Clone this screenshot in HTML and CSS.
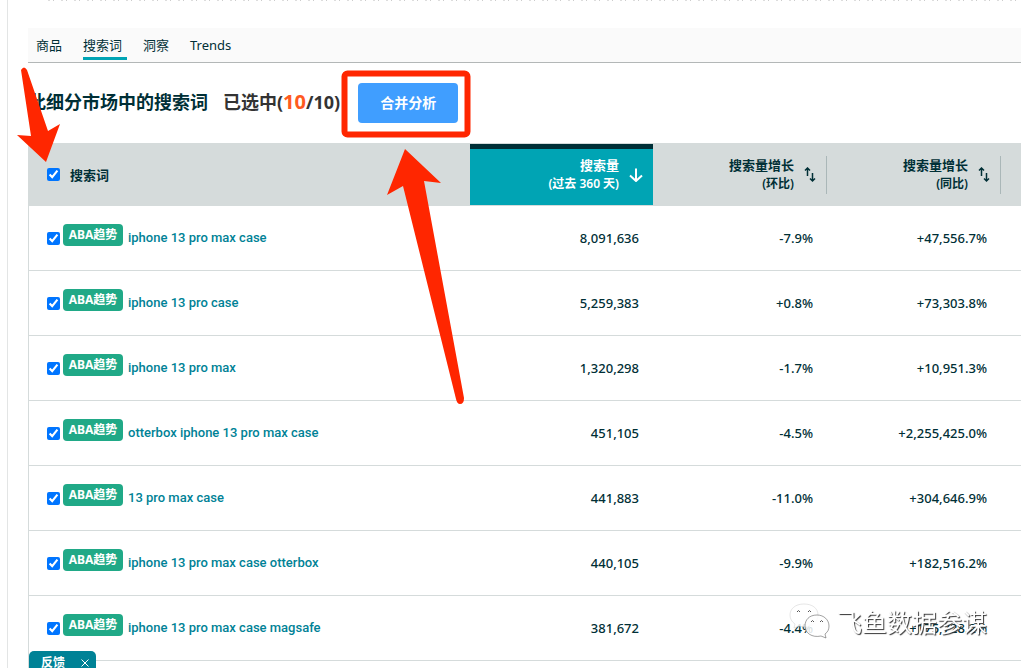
FILE: index.html
```
<!DOCTYPE html>
<html lang="zh-CN">
<head>
<meta charset="utf-8">
<title>搜索词</title>
<link rel="stylesheet" href="styles.css">
</head>
<body>
<main class="page">
  <div class="clipped-line"></div>
  <nav class="tabs">
    <a class="tab" href="#products">商品</a>
    <a class="tab tab-active" href="#terms">搜索词</a>
    <a class="tab" href="#insights">洞察</a>
    <a class="tab" href="#trends">Trends</a>
  </nav>
  <header class="toolbar">
    <h1 class="title">此细分市场中的搜索词</h1>
    <p class="selected">已选中(<span class="count">10</span>/10)</p>
    <button class="merge" type="button">合并分析</button>
  </header>
  <table class="terms">
    <colgroup><col><col class="col-volume"><col class="col-growth"><col class="col-growth"><col class="col-rest"></colgroup>
    <thead>
      <tr>
        <th scope="col"><label class="term"><input type="checkbox" checked><span class="all">搜索词</span></label></th>
        <th scope="col" class="sorted"><div class="head"><span>搜索量<br><small>(过去 360 天)</small></span><svg class="sort-down" viewBox="0 0 14 14"><path d="M7 0.500V13M1 7.500L7 13L13 7.500"/></svg></div></th>
        <th scope="col"><div class="head ruled"><span>搜索量增长<br><small>(环比)</small></span><svg class="sort" viewBox="0 0 12 16"><path d="M3.500 9V1M1 3.500L3.500 1L6 3.500M8.500 6V14M6 11.500L8.500 14L11 11.500"/></svg></div></th>
        <th scope="col"><div class="head ruled"><span>搜索量增长<br><small>(同比)</small></span><svg class="sort" viewBox="0 0 12 16"><path d="M3.500 9V1M1 3.500L3.500 1L6 3.500M8.500 6V14M6 11.500L8.500 14L11 11.500"/></svg></div></th>
        <th></th>
      </tr>
    </thead>
    <tbody>
      <tr><td><div class="term"><input type="checkbox" checked aria-label="iphone 13 pro max case"><button class="aba" type="button">ABA趋势</button><a href="#t1">iphone 13 pro max case</a></div></td><td>8,091,636</td><td>-7.9%</td><td>+47,556.7%</td><td></td></tr>
      <tr><td><div class="term"><input type="checkbox" checked aria-label="iphone 13 pro case"><button class="aba" type="button">ABA趋势</button><a href="#t2">iphone 13 pro case</a></div></td><td>5,259,383</td><td>+0.8%</td><td>+73,303.8%</td><td></td></tr>
      <tr><td><div class="term"><input type="checkbox" checked aria-label="iphone 13 pro max"><button class="aba" type="button">ABA趋势</button><a href="#t3">iphone 13 pro max</a></div></td><td>1,320,298</td><td>-1.7%</td><td>+10,951.3%</td><td></td></tr>
      <tr><td><div class="term"><input type="checkbox" checked aria-label="otterbox iphone 13 pro max case"><button class="aba" type="button">ABA趋势</button><a href="#t4">otterbox iphone 13 pro max case</a></div></td><td>451,105</td><td>-4.5%</td><td>+2,255,425.0%</td><td></td></tr>
      <tr><td><div class="term"><input type="checkbox" checked aria-label="13 pro max case"><button class="aba" type="button">ABA趋势</button><a href="#t5">13 pro max case</a></div></td><td>441,883</td><td>-11.0%</td><td>+304,646.9%</td><td></td></tr>
      <tr><td><div class="term"><input type="checkbox" checked aria-label="iphone 13 pro max case otterbox"><button class="aba" type="button">ABA趋势</button><a href="#t6">iphone 13 pro max case otterbox</a></div></td><td>440,105</td><td>-9.9%</td><td>+182,516.2%</td><td></td></tr>
      <tr><td><div class="term"><input type="checkbox" checked aria-label="iphone 13 pro max case magsafe"><button class="aba" type="button">ABA趋势</button><a href="#t7">iphone 13 pro max case magsafe</a></div></td><td>381,672</td><td>-4.4%</td><td>+175,728.2%</td><td></td></tr>
      <tr class="next"><td></td><td></td><td></td><td></td><td></td></tr>
    </tbody>
  </table>
</main>
<button class="feedback" type="button"><span>反馈</span><svg viewBox="0 0 8 8"><path d="M0.500 0.500L7.500 7.500M7.500 0.500L0.500 7.500"/></svg></button>
<svg class="marks" viewBox="0 0 480 410" aria-hidden="true">
  <rect x="344.500" y="73.500" width="123" height="61" rx="3"/>
  <path d="M21 70Q24 65 27 70L48 131L60 124L46 162L17 135L31 136Z"/>
  <path d="M405 149L441 183L424 181L464 398Q464 404 460 404Q457 404 456 399L403 186L387 195Z"/>
</svg>
<div class="watermark">
  <svg viewBox="0 0 42 36"><path class="bubble" d="M15 1C6 1 1 6 1 12C1 16 3 19 6 21L5 25L10 23C21 26 29 20 29 12C29 5 23 1 15 1Z"/><path class="bubble edge" d="M28 12C20 12 16 17 16 23C16 30 23 35 32 33L37 35L36 31C39 29 40 26 40 23C40 17 35 12 28 12Z"/><path class="eyes" d="M8 9Q9.500 6 11 9M19 9Q20.500 6 22 9M22 19Q23.500 16 25 19M31 19Q32.500 16 34 19"/></svg>
  <span>飞鱼数据参谋</span>
</div>
</body>
</html>
```
FILE: styles.css
```
* { box-sizing: border-box; }
body {
  margin: 0;
  height: 100vh;
  overflow: hidden;
  background: #fff;
  color: #002f36;
  font: 13px/20px "Noto Sans", "Noto Sans CJK SC", sans-serif;
}
button { font: inherit; border: 0; padding: 0; color: #fff; }
a { text-decoration: none; color: inherit; }
.page {
  min-height: 100vh;
  margin-left: 7px;
  padding-left: 20px;
  border-left: 1px solid #e3e5e5;
}
.clipped-line {
  height: 1px;
  margin: 0 0 27px 20px;
  background: repeating-linear-gradient(90deg, #ddd 0 2px, #fff 2px 5px, #ccc 5px 6px, #fff 6px 13px);
}
.tabs {
  display: flex;
  gap: 16px;
  height: 35px;
  padding: 7px 8px 0;
  background: #fafafa;
  border-bottom: 1px solid #b3b7b7;
}
.tab { padding-right: 5px; height: 25px; }
.tab-active { border-bottom: 3px solid #00a4b4; }
.toolbar {
  display: flex;
  align-items: center;
  height: 80px;
}
.title, .selected { margin: 0; padding-bottom: 2px; font-size: 18px; line-height: 28px; font-weight: 600; }
.selected { margin: 0 18px 0 15px; color: #333; font-weight: 700; }
.count { color: #ff5a1f; font-size: 20px; }
.merge {
  width: 100px;
  height: 40px;
  border-radius: 4px;
  background: #409eff;
  font-size: 14px;
  font-weight: 600;
}
.terms { width: 100%; table-layout: fixed; border-collapse: separate; border-spacing: 0; border-left: 1px solid #d5dbdb; }
.col-volume { width: 183px; }
.col-growth { width: 174px; }
.col-rest { width: 20px; }
th { height: 63px; padding: 0; background: #d5dbdb; font-weight: 600; text-align: left; }
th.sorted { color: #fff; background: #00a4b4; border: solid #d5dbdb; border-width: 1px 0; box-shadow: inset 0 5px #002f36; }
th small { font-size: 12px; }
.head {
  display: flex;
  justify-content: flex-end;
  align-items: center;
  gap: 10px;
  height: 38px;
  padding-right: 10px;
  line-height: 18px;
  text-align: right;
}
.ruled { border-right: 1px solid #aab7b8; }
.head svg { fill: none; stroke: currentColor; stroke-width: 2; }
.sort-down { width: 14px; height: 14px; }
.sort { width: 12px; height: 16px; }
.head .sort { stroke-width: 1.5; }
td { height: 65px; padding: 0 14px 0 0; border-bottom: 1px solid #d5dbdb; text-align: right; font-weight: 500; }
.next td { height: 8px; border: 0; }
.term { display: flex; align-items: center; padding-left: 18px; }
.term input { width: 13px; height: 13px; margin: 0 3px 0 0; accent-color: #0075ff; }
.term a { color: #008296; font-family: Roboto, sans-serif; font-size: 13px; }
.all { padding-left: 7px; }
.aba {
  width: 60px;
  height: 22px;
  margin: 0 5px 6px 0;
  border-radius: 4px;
  background: #20a987;
  font-size: 12px;
  font-weight: 700;
}
.feedback {
  position: fixed;
  left: 29px;
  bottom: -6px;
  display: flex;
  align-items: center;
  justify-content: space-between;
  width: 67px;
  height: 23px;
  padding: 0 7px 0 12px;
  border-radius: 5px 5px 0 0;
  background: #008296;
  font-size: 12px;
  font-weight: 600;
}
.feedback svg { width: 8px; height: 8px; stroke: #fff; }
.marks {
  position: absolute;
  left: 0;
  top: 0;
  width: 480px;
  height: 410px;
  pointer-events: none;
  fill: #ff2600;
}
.marks rect { fill: none; stroke: #ff2600; stroke-width: 6; }
.watermark {
  position: fixed;
  right: 34px;
  bottom: 29px;
  display: flex;
  align-items: center;
  gap: 6px;
  color: #fff;
  font: 25px/36px "Noto Sans CJK SC", sans-serif;
  text-shadow: 1px 1px 1px #333;
}
.watermark svg { width: 42px; height: 36px; }
.bubble { fill: #fff; fill-opacity: 0.85; stroke: #ccc; stroke-width: 0.5; }
.edge { stroke: #444; }
.eyes { fill: none; stroke: #555; }
```
